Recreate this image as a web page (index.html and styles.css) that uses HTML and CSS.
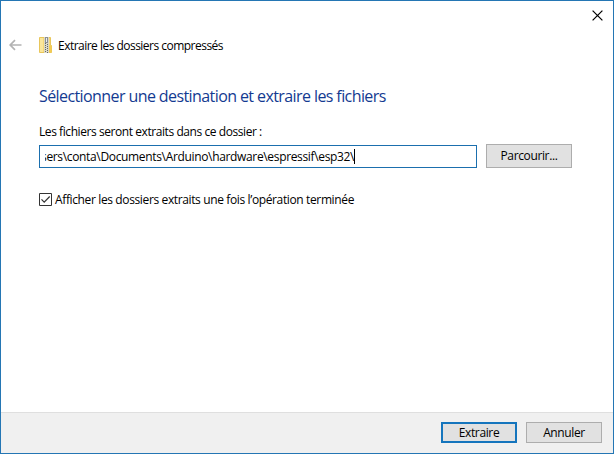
FILE: index.html
```
<!DOCTYPE html>
<html lang="fr">
<head>
<meta charset="utf-8">
<title>Extraire les dossiers compressés</title>
<link rel="stylesheet" href="styles.css">
</head>
<body>
<div class="window">
  <div class="titlebar">
    <svg class="close" width="11" height="11" viewBox="0 0 11 11"><path d="M.6.6 10.4 10.4M10.4.6.6 10.4" stroke="#000" stroke-width="1.25"/></svg>
  </div>
  <header class="header">
    <svg class="back" width="13" height="12" viewBox="0 0 13 12"><path d="M12.5 6H1.3M6 1.2 1.2 6 6 10.8" fill="none" stroke="#b3b3b3" stroke-width="1.7"/></svg>
    <svg class="zip" width="14" height="16" viewBox="0 0 14 16">
      <path d="M.5.5h11v8h1v7H.5z" fill="#f7d978" stroke="#e8c65b"/>
      <path d="M1 1h3v14H1z" fill="#fbe69b"/>
      <path d="M10 8.5h2.5v7H10z" fill="#f4cc52"/>
      <path d="M5 0h5v16H5z" fill="#dcd8c5"/>
      <path d="M6 0h3v6H6z" fill="#8c8f91"/>
      <path d="M7 1h1v4H7z" fill="#e9eef0"/>
      <path d="M6.5 6v10" stroke="#62676a" stroke-dasharray="1 1"/>
      <path d="M8.5 7v9" stroke="#62676a" stroke-dasharray="1 1"/>
    </svg>
    <span class="title">Extraire les dossiers compressés</span>
  </header>
  <main class="content">
    <h1 class="heading">Sélectionner une destination et extraire les fichiers</h1>
    <div class="label"><span>Les fichiers seront extraits dans ce dossier :</span></div>
    <div class="row">
      <div class="field"><div class="clip"><span class="path">sers\conta\Documents\Arduino\hardware\espressif\esp32\</span><i class="caret"></i></div></div>
      <button class="button browse"><span>Parcourir...</span></button>
    </div>
    <div class="option">
      <svg class="checkbox" width="13" height="13" viewBox="0 0 13 13"><path d="M.5.5h12v12H.5z" fill="#fff" stroke="#333"/><path d="M2.5 6.4 5.2 9.2 10.7 3.5" fill="none" stroke="#333" stroke-width="1.2"/></svg>
      <span class="check-text">Afficher les dossiers extraits une fois l’opération terminée</span>
    </div>
  </main>
  <footer class="footer">
    <button class="button primary"><span>Extraire</span></button>
    <button class="button"><span>Annuler</span></button>
  </footer>
</div>
</body>
</html>
```
FILE: styles.css
```
* { box-sizing: border-box; }
body { margin: 0; }
.window {
  width: 614px;
  height: 454px;
  display: flex;
  flex-direction: column;
  border: 1px solid #2476b4;
  background: #fff;
  color: #000;
  font: 12px/16px "Open Sans", "Noto Sans", sans-serif;
  letter-spacing: -0.37px;
  white-space: nowrap;
  overflow: hidden;
}
.titlebar { height: 30px; display: flex; justify-content: flex-end; padding: 9px 10px 0 0; }
.header { height: 28px; display: flex; align-items: center; padding-left: 8px; }
.back { margin-right: 17px; }
.zip { margin-right: 5px; }
.title { padding-top: 2px; letter-spacing: -0.52px; }
.content { flex: 1; padding: 25px 0 0 38px; }
.heading {
  margin: 0;
  font-size: 16px;
  line-height: 24px;
  font-weight: 400;
  color: #133a91;
  letter-spacing: -0.59px;
}
.label { margin-top: 16px; height: 16px; letter-spacing: -0.43px; }
.row { display: flex; align-items: flex-end; gap: 9px; margin-top: 3px; height: 25px; }
.field { width: 438px; height: 23px; border: 1px solid #1b6fae; padding: 3px 5px 0; }
.clip { display: flex; overflow: hidden; height: 17px; }
.path { margin-left: -4px; letter-spacing: -0.34px; }
.caret { width: 1px; height: 15px; background: #000; }
.button {
  width: 76px;
  height: 21px;
  padding: 0;
  display: flex;
  justify-content: center;
  align-items: center;
  border: 1px solid #adadad;
  background: #e1e1e1;
  color: #000;
  font: inherit;
  letter-spacing: inherit;
}
.browse { width: 86px; height: 24px; }
.primary { border: 2px solid #1575bd; }
.option { display: flex; align-items: center; gap: 3px; height: 16px; margin-top: 24px; }
.checkbox { margin-bottom: 1px; }
.footer {
  height: 41px;
  display: flex;
  justify-content: flex-end;
  gap: 9px;
  padding: 9px 11px 0 0;
  border-top: 1px solid #dfdfdf;
  background: #f0f0f0;
}
```
